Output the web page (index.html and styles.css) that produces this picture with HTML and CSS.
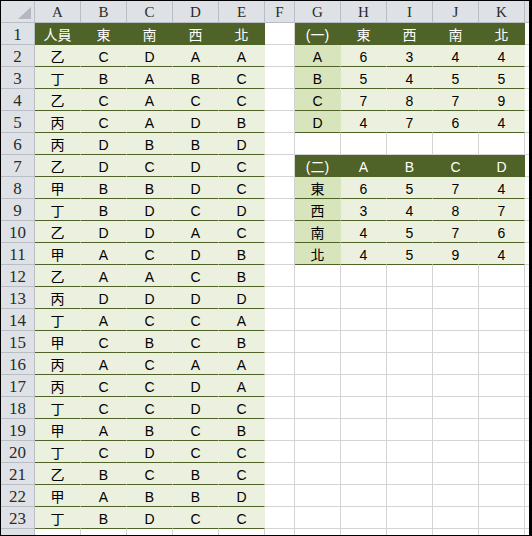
FILE: index.html
```html
<!DOCTYPE html>
<html lang="zh-Hant">
<head>
<meta charset="utf-8">
<title>工作表</title>
<link rel="stylesheet" href="styles.css">
</head>
<body>
<div class="sheet">
  <div class="row colhead">
    <div class="corner"><span class="tri"></span></div>
    <div>A</div><div>B</div><div>C</div><div>D</div><div>E</div><div>F</div><div>G</div><div>H</div><div>I</div><div>J</div><div>K</div><div></div>
  </div>
  <div class="row">
    <div class="rh">1</div>
    <div class="h">人員</div><div class="h">東</div><div class="h">南</div><div class="h">西</div><div class="h">北</div>
    <div></div>
    <div class="h">(一)</div><div class="h">東</div><div class="h">西</div><div class="h">南</div><div class="h">北</div>
    <div></div>
  </div>
  <div class="row">
    <div class="rh">2</div>
    <div class="d">乙</div><div class="d">C</div><div class="d">D</div><div class="d">A</div><div class="d">A</div>
    <div></div>
    <div class="k">A</div><div class="d">6</div><div class="d">3</div><div class="d">4</div><div class="d">4</div>
    <div></div>
  </div>
  <div class="row">
    <div class="rh">3</div>
    <div class="d">丁</div><div class="d">B</div><div class="d">A</div><div class="d">B</div><div class="d">C</div>
    <div></div>
    <div class="k">B</div><div class="d">5</div><div class="d">4</div><div class="d">5</div><div class="d">5</div>
    <div></div>
  </div>
  <div class="row">
    <div class="rh">4</div>
    <div class="d">乙</div><div class="d">C</div><div class="d">A</div><div class="d">C</div><div class="d">C</div>
    <div></div>
    <div class="k">C</div><div class="d">7</div><div class="d">8</div><div class="d">7</div><div class="d">9</div>
    <div></div>
  </div>
  <div class="row">
    <div class="rh">5</div>
    <div class="d">丙</div><div class="d">C</div><div class="d">A</div><div class="d">D</div><div class="d">B</div>
    <div></div>
    <div class="k">D</div><div class="d">4</div><div class="d">7</div><div class="d">6</div><div class="d">4</div>
    <div></div>
  </div>
  <div class="row">
    <div class="rh">6</div>
    <div class="d">丙</div><div class="d">D</div><div class="d">B</div><div class="d">B</div><div class="d">D</div>
    <div></div>
    <div></div><div></div><div></div><div></div><div></div>
    <div></div>
  </div>
  <div class="row">
    <div class="rh">7</div>
    <div class="d">乙</div><div class="d">D</div><div class="d">C</div><div class="d">D</div><div class="d">C</div>
    <div></div>
    <div class="h">(二)</div><div class="h">A</div><div class="h">B</div><div class="h">C</div><div class="h">D</div>
    <div></div>
  </div>
  <div class="row">
    <div class="rh">8</div>
    <div class="d">甲</div><div class="d">B</div><div class="d">B</div><div class="d">D</div><div class="d">C</div>
    <div></div>
    <div class="k">東</div><div class="d">6</div><div class="d">5</div><div class="d">7</div><div class="d">4</div>
    <div></div>
  </div>
  <div class="row">
    <div class="rh">9</div>
    <div class="d">丁</div><div class="d">B</div><div class="d">D</div><div class="d">C</div><div class="d">D</div>
    <div></div>
    <div class="k">西</div><div class="d">3</div><div class="d">4</div><div class="d">8</div><div class="d">7</div>
    <div></div>
  </div>
  <div class="row">
    <div class="rh">10</div>
    <div class="d">乙</div><div class="d">D</div><div class="d">D</div><div class="d">A</div><div class="d">C</div>
    <div></div>
    <div class="k">南</div><div class="d">4</div><div class="d">5</div><div class="d">7</div><div class="d">6</div>
    <div></div>
  </div>
  <div class="row">
    <div class="rh">11</div>
    <div class="d">甲</div><div class="d">A</div><div class="d">C</div><div class="d">D</div><div class="d">B</div>
    <div></div>
    <div class="k">北</div><div class="d">4</div><div class="d">5</div><div class="d">9</div><div class="d">4</div>
    <div></div>
  </div>
  <div class="row">
    <div class="rh">12</div>
    <div class="d">乙</div><div class="d">A</div><div class="d">A</div><div class="d">C</div><div class="d">B</div>
    <div></div><div></div><div></div><div></div><div></div><div></div><div></div>
  </div>
  <div class="row">
    <div class="rh">13</div>
    <div class="d">丙</div><div class="d">D</div><div class="d">D</div><div class="d">D</div><div class="d">D</div>
    <div></div><div></div><div></div><div></div><div></div><div></div><div></div>
  </div>
  <div class="row">
    <div class="rh">14</div>
    <div class="d">丁</div><div class="d">A</div><div class="d">C</div><div class="d">C</div><div class="d">A</div>
    <div></div><div></div><div></div><div></div><div></div><div></div><div></div>
  </div>
  <div class="row">
    <div class="rh">15</div>
    <div class="d">甲</div><div class="d">C</div><div class="d">B</div><div class="d">C</div><div class="d">B</div>
    <div></div><div></div><div></div><div></div><div></div><div></div><div></div>
  </div>
  <div class="row">
    <div class="rh">16</div>
    <div class="d">丙</div><div class="d">A</div><div class="d">C</div><div class="d">A</div><div class="d">A</div>
    <div></div><div></div><div></div><div></div><div></div><div></div><div></div>
  </div>
  <div class="row">
    <div class="rh">17</div>
    <div class="d">丙</div><div class="d">C</div><div class="d">C</div><div class="d">D</div><div class="d">A</div>
    <div></div><div></div><div></div><div></div><div></div><div></div><div></div>
  </div>
  <div class="row">
    <div class="rh">18</div>
    <div class="d">丁</div><div class="d">C</div><div class="d">C</div><div class="d">D</div><div class="d">C</div>
    <div></div><div></div><div></div><div></div><div></div><div></div><div></div>
  </div>
  <div class="row">
    <div class="rh">19</div>
    <div class="d">甲</div><div class="d">A</div><div class="d">B</div><div class="d">C</div><div class="d">B</div>
    <div></div><div></div><div></div><div></div><div></div><div></div><div></div>
  </div>
  <div class="row">
    <div class="rh">20</div>
    <div class="d">丁</div><div class="d">C</div><div class="d">D</div><div class="d">C</div><div class="d">C</div>
    <div></div><div></div><div></div><div></div><div></div><div></div><div></div>
  </div>
  <div class="row">
    <div class="rh">21</div>
    <div class="d">乙</div><div class="d">B</div><div class="d">C</div><div class="d">B</div><div class="d">C</div>
    <div></div><div></div><div></div><div></div><div></div><div></div><div></div>
  </div>
  <div class="row">
    <div class="rh">22</div>
    <div class="d">甲</div><div class="d">A</div><div class="d">B</div><div class="d">B</div><div class="d">D</div>
    <div></div><div></div><div></div><div></div><div></div><div></div><div></div>
  </div>
  <div class="row">
    <div class="rh">23</div>
    <div class="d">丁</div><div class="d">B</div><div class="d">D</div><div class="d">C</div><div class="d">C</div>
    <div></div><div></div><div></div><div></div><div></div><div></div><div></div>
  </div>
  <div class="row">
    <div class="rh"></div>
    <div></div><div></div><div></div><div></div><div></div>
    <div></div><div></div><div></div><div></div><div></div><div></div><div></div>
  </div>
</div>
</body>
</html>
```

FILE: styles.css
```css
* {
  box-sizing: border-box;
}

body {
  margin: 0;
  background: #ffffff;
}

.sheet {
  width: 532px;
  height: 536px;
  border: 1px solid #000000;
  border-right-width: 3px;
  overflow: hidden;
  background: #ffffff;
  font-family: "Liberation Sans", "Noto Sans CJK TC", sans-serif;
  font-size: 14px;
  color: #000000;
}

.row {
  display: grid;
  grid-template-columns: 34px repeat(5, 46px) 30px repeat(6, 46px);
  height: 22px;
}

.row > div {
  display: flex;
  align-items: center;
  justify-content: center;
  padding-top: 2px;
  border-right: 1px solid #d4d4d4;
  border-bottom: 1px solid #d4d4d4;
  white-space: nowrap;
  line-height: 1;
}

.colhead > div {
  background: #dee2e7;
  border-color: #b9bec5;
  font-family: "Liberation Serif", serif;
  font-size: 15px;
  color: #2a2a2a;
}

.row > .rh {
  background: #dee2e7;
  border-color: #b9bec5;
  font-family: "Liberation Serif", serif;
  font-size: 17px;
  color: #2a2a2a;
}

.colhead > .corner {
  justify-content: flex-end;
  align-items: flex-end;
  padding: 0 3px 3px 0;
}

.tri {
  width: 0;
  height: 0;
  border-left: 13px solid transparent;
  border-bottom: 12px solid #b4b8be;
}

.row > .h {
  background: #4f6228;
  border-color: #4f6228;
  color: #ffffff;
}

.row > .d {
  background: #ebf1de;
  border-right-color: #ebf1de;
  border-bottom-color: #4f6228;
}

.row > .k {
  background: #d8e4bc;
  border-right-color: #d8e4bc;
  border-bottom-color: #4f6228;
}
```
